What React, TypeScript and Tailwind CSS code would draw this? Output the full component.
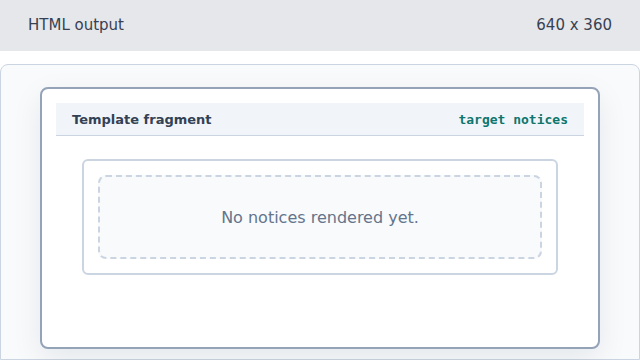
export default function App() {
  return (
    <div className="w-[640px] h-[360px] overflow-hidden bg-white flex flex-col font-[family-name:'DejaVu_Sans',sans-serif]">
      {/* top bar */}
      <div className="h-[51px] shrink-0 bg-[#e5e7eb] flex items-center justify-between px-[28px] text-[15px] text-[#374151]">
        <span>HTML output</span>
        <span>640 x 360</span>
      </div>

      <div className="h-[13px] shrink-0" />

      {/* preview panel */}
      <div className="flex-1 border border-[#cbd5e1] rounded-t-[8px] bg-[#f8fafc] px-[39px] pt-[22px]">
        <div className="h-[262px] border-2 border-[#94a3b8] rounded-[8px] bg-white p-[14px] shadow-[0_10px_30px_rgba(15,23,42,0.08)]">
          <div className="h-[33px] bg-[#f1f5f9] border-b border-[#cbd5e1] flex items-center justify-between px-[16px] pt-px">
            <span className="text-[13px] font-bold text-[#334155]">Template fragment</span>
            <span className="text-[13px] font-bold text-[#0f766e] font-[family-name:'DejaVu_Sans_Mono',monospace]">target notices</span>
          </div>

          <div className="mt-[23px] mx-[26px] border-2 border-[#cbd5e1] rounded-[6px] p-[14px]">
            <div className="h-[84px] border-2 border-dashed border-[#cbd5e1] rounded-[8px] bg-[#f8fafc] flex items-center justify-center pt-[2px] text-[16px] text-[#64748b]">
              No notices rendered yet.
            </div>
          </div>
        </div>
      </div>
    </div>
  );
}
